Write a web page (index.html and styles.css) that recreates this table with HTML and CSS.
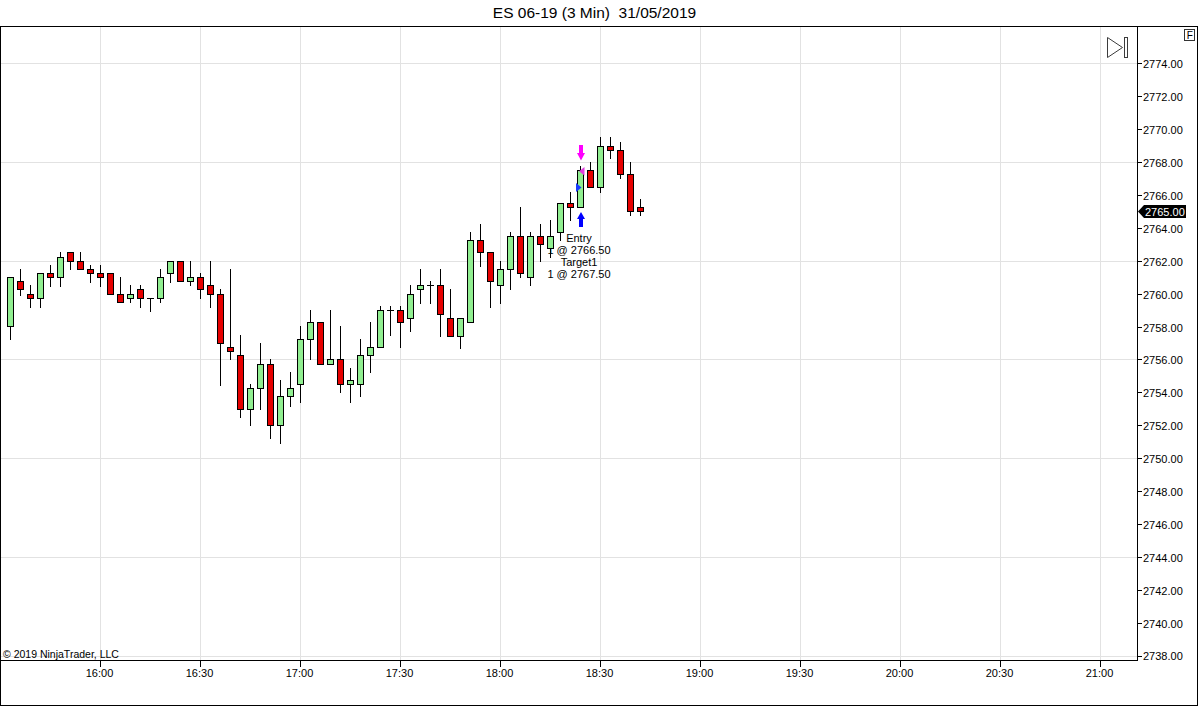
FILE: index.html
```html
<!DOCTYPE html>
<html>
<head>
<meta charset="utf-8">
<title>ES 06-19 (3 Min) 31/05/2019</title>
<link rel="stylesheet" href="styles.css">
</head>
<body>
<div class="title">ES 06-19 (3 Min)  31/05/2019</div>
<div class="chart">
  <div class="plot">
    <svg class="plot-svg" width="1136" height="633" viewBox="1 27 1136 633">
      <path class="grid" d="M1 63.5H1137M1 162.5H1137M1 261.5H1137M1 359.5H1137M1 458.5H1137M1 557.5H1137M1 656.5H1137M100.5 27V660M200.5 27V660M300.5 27V660M400.5 27V660M500.5 27V660M600.5 27V660M700.5 27V660M800.5 27V660M900.5 27V660M1000.5 27V660M1100.5 27V660"/>
      <text class="lbl copy" x="3" y="658">© 2019 NinjaTrader, LLC</text>
      <g class="exec-text">
        <text x="579" y="241.5">Entry</text>
        <text x="579" y="253.5">1 @ 2766.50</text>
        <text x="579" y="265.5">Target1</text>
        <text x="579" y="277.5">1 @ 2767.50</text>
      </g>
      <path class="wick" d="M10.5 277V340M20.5 269V296M30.5 285V308M40.5 273V308M50.5 265V287M60.5 252V287M70.5 252V270M80.5 252V270M90.5 265V283M100.5 265V287M110.5 273V295M120.5 277V303M130.5 285V303M140.5 285V308M150.5 298V312M160.5 269V303M170.5 261V283M180.5 261V282M190.5 261V286M200.5 273V299M210.5 261V308M220.5 289V386M230.5 269V360M240.5 335V418M250.5 384V426M260.5 343V410M270.5 359V439M280.5 380V444M290.5 372V407M300.5 326V403M310.5 310V360M320.5 322V365M330.5 310V365M340.5 326V393M350.5 368V403M360.5 339V397M370.5 322V373M380.5 306V348M390.5 306V336M400.5 306V348M410.5 285V332M420.5 269V304M430.5 281V304M440.5 269V337M450.5 289V337M460.5 318V349M470.5 232V323M480.5 224V267M490.5 252V308M500.5 261V304M510.5 232V290M520.5 207V278M530.5 232V286M540.5 224V262M550.5 220V258M560.5 203V241M570.5 192V221M580.5 166V208M590.5 162V188M600.5 137V193M610.5 137V159M620.5 142V179M630.5 162V216M640.5 199V216M147 298.5H154M387 310.5H394M427 285.5H434"/>
      <g class="up">
        <rect x="7.5" y="277.5" width="6" height="49"/>
        <rect x="37.5" y="273.5" width="6" height="25"/>
        <rect x="57.5" y="257.5" width="6" height="20"/>
        <rect x="127.5" y="294.5" width="6" height="4"/>
        <rect x="157.5" y="277.5" width="6" height="21"/>
        <rect x="167.5" y="261.5" width="6" height="12"/>
        <rect x="187.5" y="277.5" width="6" height="4"/>
        <rect x="247.5" y="388.5" width="6" height="21"/>
        <rect x="257.5" y="364.5" width="6" height="24"/>
        <rect x="277.5" y="396.5" width="6" height="29"/>
        <rect x="287.5" y="388.5" width="6" height="8"/>
        <rect x="297.5" y="339.5" width="6" height="45"/>
        <rect x="307.5" y="322.5" width="6" height="17"/>
        <rect x="327.5" y="359.5" width="6" height="5"/>
        <rect x="347.5" y="380.5" width="6" height="4"/>
        <rect x="357.5" y="355.5" width="6" height="29"/>
        <rect x="367.5" y="347.5" width="6" height="8"/>
        <rect x="377.5" y="310.5" width="6" height="37"/>
        <rect x="407.5" y="294.5" width="6" height="24"/>
        <rect x="417.5" y="285.5" width="6" height="4"/>
        <rect x="457.5" y="318.5" width="6" height="18"/>
        <rect x="467.5" y="240.5" width="6" height="82"/>
        <rect x="497.5" y="269.5" width="6" height="16"/>
        <rect x="507.5" y="236.5" width="6" height="33"/>
        <rect x="527.5" y="236.5" width="6" height="41"/>
        <rect x="547.5" y="236.5" width="6" height="12"/>
        <rect x="557.5" y="203.5" width="6" height="29"/>
        <rect x="577.5" y="170.5" width="6" height="37"/>
        <rect x="597.5" y="146.5" width="6" height="41"/>
      </g>
      <g class="dn">
        <rect x="17.5" y="281.5" width="6" height="8"/>
        <rect x="27.5" y="294.5" width="6" height="4"/>
        <rect x="47.5" y="273.5" width="6" height="4"/>
        <rect x="67.5" y="252.5" width="6" height="9"/>
        <rect x="77.5" y="261.5" width="6" height="8"/>
        <rect x="87.5" y="269.5" width="6" height="4"/>
        <rect x="97.5" y="273.5" width="6" height="4"/>
        <rect x="107.5" y="273.5" width="6" height="21"/>
        <rect x="117.5" y="294.5" width="6" height="8"/>
        <rect x="137.5" y="289.5" width="6" height="9"/>
        <rect x="177.5" y="261.5" width="6" height="20"/>
        <rect x="197.5" y="277.5" width="6" height="12"/>
        <rect x="207.5" y="285.5" width="6" height="9"/>
        <rect x="217.5" y="294.5" width="6" height="49"/>
        <rect x="227.5" y="347.5" width="6" height="4"/>
        <rect x="237.5" y="355.5" width="6" height="54"/>
        <rect x="267.5" y="364.5" width="6" height="61"/>
        <rect x="317.5" y="322.5" width="6" height="42"/>
        <rect x="337.5" y="359.5" width="6" height="25"/>
        <rect x="397.5" y="310.5" width="6" height="12"/>
        <rect x="437.5" y="285.5" width="6" height="29"/>
        <rect x="447.5" y="318.5" width="6" height="18"/>
        <rect x="477.5" y="240.5" width="6" height="12"/>
        <rect x="487.5" y="252.5" width="6" height="29"/>
        <rect x="517.5" y="236.5" width="6" height="37"/>
        <rect x="537.5" y="236.5" width="6" height="8"/>
        <rect x="567.5" y="203.5" width="6" height="4"/>
        <rect x="587.5" y="170.5" width="6" height="17"/>
        <rect x="607.5" y="146.5" width="6" height="4"/>
        <rect x="617.5" y="150.5" width="6" height="24"/>
        <rect x="627.5" y="174.5" width="6" height="37"/>
        <rect x="637.5" y="207.5" width="6" height="4"/>
      </g>
      <polygon class="sell" points="579,145 583,145 583,153 585,153 581,160.5 577,153 579,153"/>
      <polygon class="sell-exit" points="584.5,167 584.5,175.5 579,171.2"/>
      <polygon class="buy-exit" points="576,183 576,192 581.5,187.5"/>
      <polygon class="buy" points="581,212 585,219 583,219 583,227 579,227 579,219 577,219"/>
      <g class="nav-icon">
        <polygon points="1107.5,37.5 1107.5,57.5 1122.5,47.5"/>
        <rect x="1124.5" y="37.5" width="3" height="20"/>
      </g>
    </svg>
  </div>
  <div class="price-axis">
    <svg width="59" height="634" viewBox="1138 27 59 634">
      <rect class="fbox" x="1184.5" y="29.5" width="10" height="11"/>
      <text class="ftext" x="1189.7" y="38.5">F</text>
      <path class="tick" d="M1138 63.5H1142M1138 96.5H1142M1138 129.5H1142M1138 162.5H1142M1138 195.5H1142M1138 228.5H1142M1138 261.5H1142M1138 294.5H1142M1138 327.5H1142M1138 359.5H1142M1138 392.5H1142M1138 425.5H1142M1138 458.5H1142M1138 491.5H1142M1138 524.5H1142M1138 557.5H1142M1138 590.5H1142M1138 623.5H1142M1138 656.5H1142"/>
      <g class="lbl">
        <text x="1143" y="67.5">2774.00</text>
        <text x="1143" y="100.5">2772.00</text>
        <text x="1143" y="133.5">2770.00</text>
        <text x="1143" y="166.5">2768.00</text>
        <text x="1143" y="199.5">2766.00</text>
        <text x="1143" y="232.5">2764.00</text>
        <text x="1143" y="265.5">2762.00</text>
        <text x="1143" y="298.5">2760.00</text>
        <text x="1143" y="331.5">2758.00</text>
        <text x="1143" y="363.5">2756.00</text>
        <text x="1143" y="396.5">2754.00</text>
        <text x="1143" y="429.5">2752.00</text>
        <text x="1143" y="462.5">2750.00</text>
        <text x="1143" y="495.5">2748.00</text>
        <text x="1143" y="528.5">2746.00</text>
        <text x="1143" y="561.5">2744.00</text>
        <text x="1143" y="594.5">2742.00</text>
        <text x="1143" y="627.5">2740.00</text>
        <text x="1143" y="660">2738.00</text>
      </g>
      <polygon class="last" points="1138,211.5 1144,205 1186,205 1186,218 1144,218"/>
      <text class="lbl last-text" x="1145" y="215.5">2765.00</text>
    </svg>
  </div>
  <div class="time-axis">
    <svg width="1196" height="44" viewBox="1 661 1196 44">
      <path class="tick" d="M100.5 661V667M200.5 661V667M300.5 661V667M400.5 661V667M500.5 661V667M600.5 661V667M700.5 661V667M800.5 661V667M900.5 661V667M1000.5 661V667M1100.5 661V667"/>
      <g class="lbl mid">
        <text x="99.5" y="677">16:00</text>
        <text x="199.5" y="677">16:30</text>
        <text x="299.5" y="677">17:00</text>
        <text x="399.5" y="677">17:30</text>
        <text x="499.5" y="677">18:00</text>
        <text x="599.5" y="677">18:30</text>
        <text x="699.5" y="677">19:00</text>
        <text x="799.5" y="677">19:30</text>
        <text x="899.5" y="677">20:00</text>
        <text x="999.5" y="677">20:30</text>
        <text x="1099.5" y="677">21:00</text>
      </g>
    </svg>
  </div>
</div>
</body>
</html>
```
FILE: styles.css
```css
html, body {
  margin: 0;
  padding: 0;
  background: #fff;
  overflow: hidden;
}
body {
  width: 1198px;
  height: 706px;
  font-family: "Liberation Sans", Arial, sans-serif;
  color: #000;
}
.title {
  height: 26px;
  line-height: 26px;
  font-size: 15.5px;
  text-align: center;
  padding-right: 9px;
  white-space: pre;
}
.chart {
  display: grid;
  grid-template-columns: 1137px 59px;
  grid-template-rows: 634px 44px;
  border: 1px solid #000;
  width: 1196px;
  height: 678px;
}
.plot {
  border-right: 1px solid #000;
  border-bottom: 1px solid #000;
  overflow: hidden;
}
.price-axis svg {
  overflow: visible;
}
.time-axis {
  grid-column: 1 / -1;
  overflow: hidden;
}
svg {
  display: block;
}
.grid {
  stroke: #e2e2e2;
  stroke-width: 1;
  fill: none;
}
.wick, .tick {
  stroke: #000;
  stroke-width: 1;
  fill: none;
}
.up rect {
  fill: #90ee90;
  stroke: #000;
  stroke-width: 1;
}
.dn rect {
  fill: #e60000;
  stroke: #000;
  stroke-width: 1;
}
.lbl {
  font-family: "Liberation Sans", Arial, sans-serif;
  font-size: 11px;
  fill: #000;
}
.mid {
  text-anchor: middle;
}
.copy {
  font-size: 10.5px;
}
.exec-text {
  font-family: "Liberation Sans", Arial, sans-serif;
  font-size: 11px;
  text-anchor: middle;
  fill: #000;
}
.sell {
  fill: #ff00ff;
}
.sell-exit {
  fill: #e040e0;
}
.buy-exit {
  fill: #1a3cff;
}
.buy {
  fill: #0000ff;
}
.nav-icon polygon, .nav-icon rect {
  fill: none;
  stroke: #3c3c3c;
  stroke-width: 1;
}
.fbox {
  fill: #fff;
  stroke: #333;
  stroke-width: 1;
}
.ftext {
  font-family: "Liberation Sans", Arial, sans-serif;
  font-size: 10px;
  text-anchor: middle;
  fill: #000;
}
.last {
  fill: #000;
}
.last-text {
  fill: #fff;
}
```
